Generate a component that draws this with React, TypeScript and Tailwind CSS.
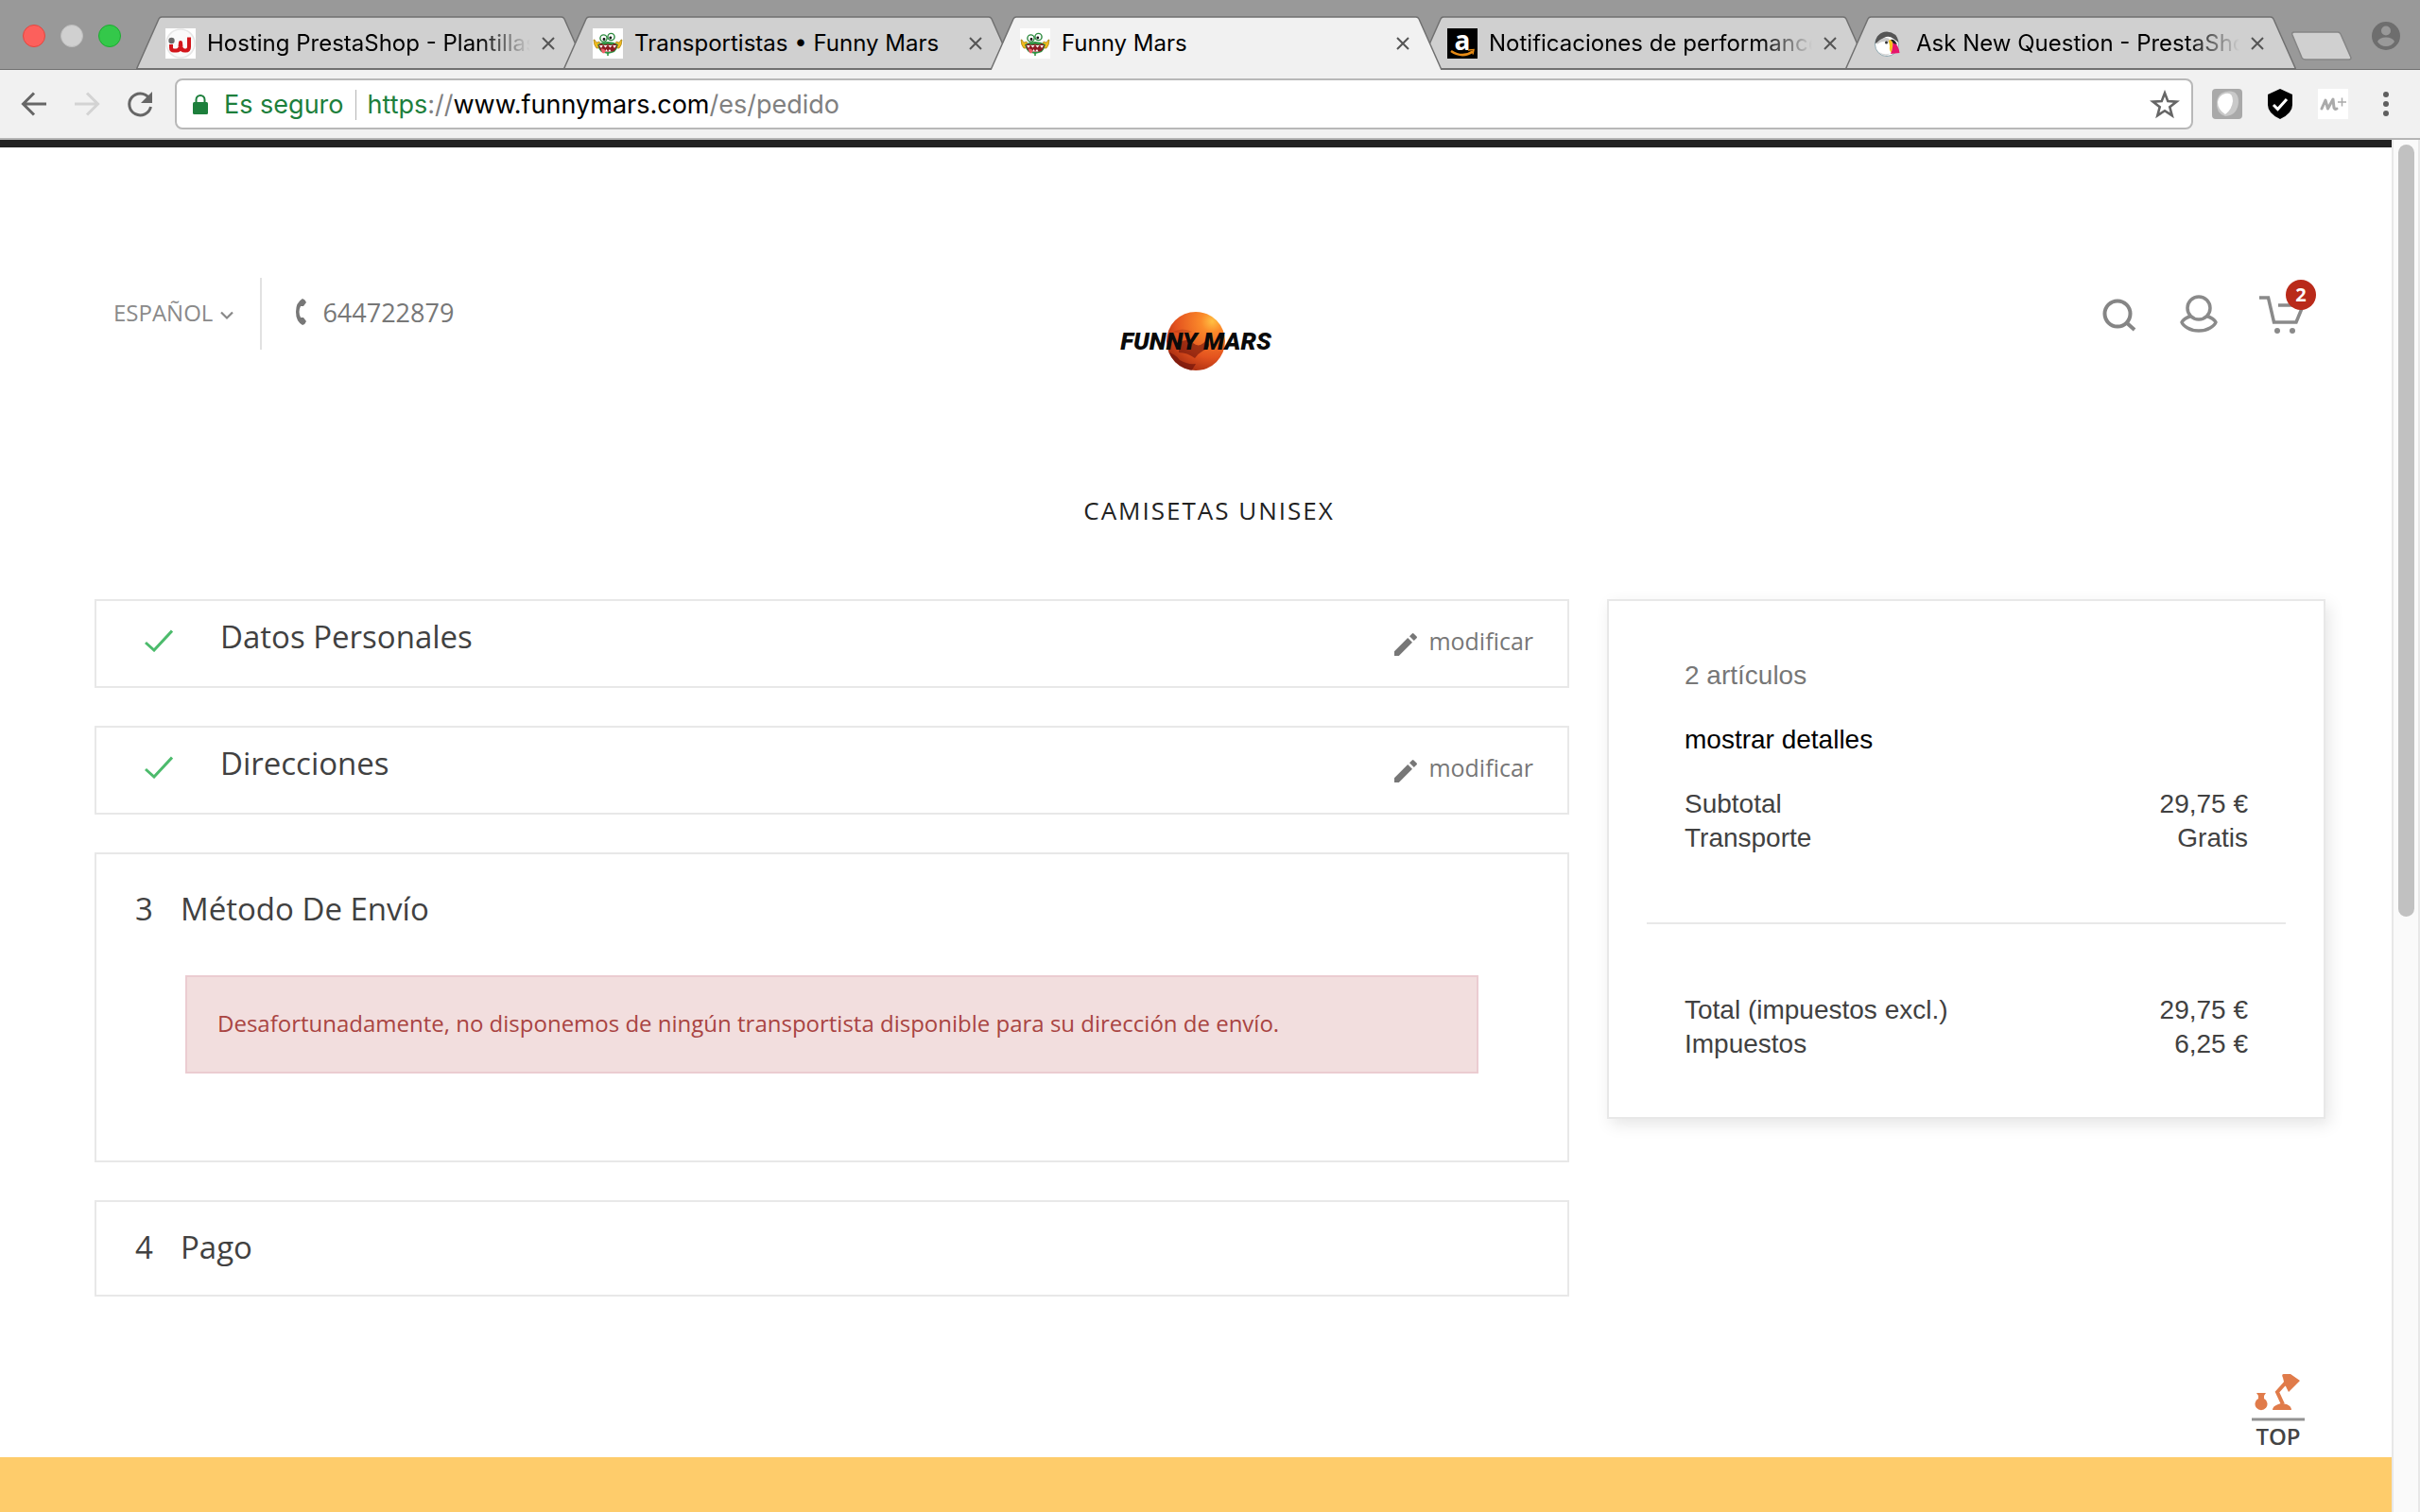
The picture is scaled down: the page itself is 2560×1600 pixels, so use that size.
import React from "react";

type TabData = { title: string; icon: React.ReactNode; active?: boolean; fade?: boolean };

function HostingIcon() {
  return (
    <svg viewBox="0 0 32 32" className="size-8 shrink-0" aria-hidden="true">
      <rect width="32" height="32" fill="#fff" />
      <circle cx="16" cy="16" r="15" fill="#fafafa" stroke="#e6e6e6" strokeWidth="1.5" />
      <circle cx="6.5" cy="13" r="3.2" fill="#6b6b6b" />
      <path d="M6 17v3.500q0 3 3 3h2.500q3.500 0 4-3.500l.5-5 .5 5q.5 3.500 4 3.500h1q3.500 0 3.500-4V9.500" fill="none" stroke="#d3151b" strokeWidth="4" strokeLinejoin="round" />
    </svg>
  );
}

function MonsterIcon() {
  return (
    <svg viewBox="0 0 32 32" className="size-8 shrink-0" aria-hidden="true">
      <rect width="32" height="32" fill="#fff" />
      <path d="M1 12q0 6 3 9 3 1 5-3l-2-4-3 1-2-3zM31 12q0 6-3 9-3 1-5-3l2-4 3 1 2-3z" fill="#f3b91b" stroke="#8f7414" strokeWidth=".6" />
      <path d="M5 17q5-3 11-3t11 3q-1 5-4 8l-3 1-4 1-4-1-3-1q-3-3-4-8z" fill="#2d9443" />
      <path d="m6 18 3-2 3 1.500 4-1 4 1 3-1.500 3 2q-2 6-5 6.500l-5 .5-5-.5q-3-.5-5-6.500z" fill="#8e1b22" />
      <path d="m7 18 2 3 2-3.500 2.500 3 2.500-3 2.500 3 2.500-3 2 3.500 2-3zM13 24.500l1.500-2.500 1.500 2.500 2-2.500 1.500 2.500z" fill="#fff" />
      <path d="M9 21.500q3-.500 4.500 2 0 2.500-2.500 3-2-1-2-5z" fill="#f0606a" />
      <path d="M16 26v3" stroke="#2d9443" strokeWidth="1.600" />
      <circle cx="11.500" cy="10.500" r="3.600" fill="#fff" stroke="#2d8a3f" strokeWidth="1.400" />
      <circle cx="19.500" cy="9" r="3.600" fill="#fff" stroke="#2d8a3f" strokeWidth="1.400" />
      <circle cx="12" cy="11.500" r="1.400" fill="#111" />
      <circle cx="18.800" cy="10" r="1.400" fill="#111" />
    </svg>
  );
}

function AmazonIcon() {
  return (
    <span className="relative flex size-8 shrink-0 items-center justify-center bg-black pb-2 font-['Open_Sans',sans-serif] text-[28px] leading-none font-bold text-white">
      a
      <svg viewBox="0 0 32 32" className="absolute inset-0 size-8" aria-hidden="true">
        <path d="M4 24q12 8 23 .5" fill="none" stroke="#e88b14" strokeWidth="2.600" />
        <path d="m22 23 6-.5-1 5" fill="none" stroke="#e88b14" strokeWidth="1.500" />
      </svg>
    </span>
  );
}

function PuffinIcon() {
  return (
    <svg viewBox="0 0 32 32" className="size-8 shrink-0" aria-hidden="true">
      <circle cx="13" cy="17" r="12.500" fill="#fff" stroke="#8fa9b2" />
      <path d="M.5 16Q2 4 13 3.500 24 4 25.500 15L20 11q-5-4-10-1-3 4-9.500 6z" fill="#555" />
      <path d="M2.500 15q7-7 13-4l1 5q-6-5-14 1z" fill="#c9c9c9" />
      <circle cx="12.500" cy="15" r="1.500" fill="#333" />
      <path d="M15 13q2-2 3.500 0l1 5-1.500 8q-3-3-2-7z" fill="#f8c31c" />
      <path d="M19 14q6 2 7.500 12L17 27q3-7 2-13z" fill="#e6156b" />
      <path d="M17 12q4-1 7 5l-4-1z" fill="#222" />
      <path d="M5 25q6 4 12 1l-4 3q-5 0-8-4z" fill="#d8d8d8" />
    </svg>
  );
}

const tabs: TabData[] = [
  { title: "Hosting PrestaShop - Plantillas", icon: <HostingIcon />, fade: true },
  { title: "Transportistas • Funny Mars", icon: <MonsterIcon /> },
  { title: "Funny Mars", icon: <MonsterIcon />, active: true },
  { title: "Notificaciones de performance", icon: <AmazonIcon />, fade: true },
  { title: "Ask New Question - PrestaShop", icon: <PuffinIcon />, fade: true },
];

function Tab({ tab }: { tab: TabData }) {
  return (
    <div className={tab.active ? "relative z-10 -mr-[25px] h-[57px] max-w-[477px] min-w-0 flex-1" : "relative -mr-[25px] h-[57px] max-w-[477px] min-w-0 flex-1"}>
      <svg viewBox="0 0 477 57" preserveAspectRatio="none" className="absolute inset-0 size-full" aria-hidden="true">
        <path d="M0 57 24 3Q25 1 27 1H450q2 0 3 2l24 54" fill={tab.active ? "#f1f1f1" : "#d0d0d0"} stroke="#707070" strokeWidth="1.500" />
        {!tab.active && <path d="M0 56H477" stroke="#707070" strokeWidth="2" />}
      </svg>
      <div className="relative flex h-full items-center gap-3 pt-px pr-[34px] pl-[31px]">
        {tab.icon}
        <span className={tab.fade ? "min-w-0 flex-1 overflow-hidden whitespace-nowrap [mask-image:linear-gradient(to_right,black_84%,transparent)]" : "min-w-0 flex-1 overflow-hidden whitespace-nowrap"}>
          {tab.title}
        </span>
        <button type="button" aria-label={"Cerrar " + tab.title} className="shrink-0">
          <svg viewBox="0 0 14 14" className="size-[14px]" aria-hidden="true">
            <path d="m1 1 12 12M13 1 1 13" stroke="#555" strokeWidth="2" />
          </svg>
        </button>
      </div>
    </div>
  );
}

function TabStrip() {
  return (
    <div className="flex h-[74px] items-end border-b border-[#707070] bg-[#999] text-2xl text-black">
      <div className="flex w-36 shrink-0 gap-4 self-center pt-[2px] pl-6">
        <button type="button" aria-label="Cerrar ventana" className="size-6 rounded-full border border-[#e2463f] bg-[#fc605c]" />
        <button type="button" aria-label="Minimizar" className="size-6 rounded-full border border-[#bdbdbd] bg-[#d0d0d0]" />
        <button type="button" aria-label="Ampliar" className="size-6 rounded-full border border-[#1dab31] bg-[#34c84a]" />
      </div>
      <div className="-mb-px flex min-w-0 flex-1">
        {tabs.map((t) => (
          <Tab key={t.title} tab={t} />
        ))}
        <button type="button" aria-label="Nueva pestaña" className="mt-4 ml-5 h-8 shrink-0">
          <svg viewBox="0 0 64 32" className="h-8 w-16" aria-hidden="true">
            <path d="M3 1H49q2 0 3 2l11 25q0 2-2 2H15q-3 0-4-2L1 4Q0 1 3 1z" fill="#d0d0d0" stroke="#858585" strokeWidth="1.500" />
          </svg>
        </button>
      </div>
      <button type="button" aria-label="Perfil" className="mr-5 mb-[19px] shrink-0">
        <svg viewBox="0 0 32 32" className="size-8" aria-hidden="true">
          <circle cx="16" cy="16" r="15" fill="#6e6e6e" />
          <circle cx="16" cy="10.500" r="5" fill="#999" />
          <path d="M7 22q2-4.500 9-4.500t9 4.500q-3 5-9 5t-9-5z" fill="#999" />
        </svg>
      </button>
    </div>
  );
}

function Toolbar() {
  return (
    <div className="flex h-[74px] items-center border-b-2 border-[#b5b5b5] bg-[#f1f1f1] pr-5 pl-5 text-[27px]">
      <div className="flex w-[165px] shrink-0 gap-6">
        <button type="button" aria-label="Atrás">
          <svg viewBox="0 0 32 32" className="size-8" fill="none" stroke="#666" strokeWidth="3" aria-hidden="true">
            <path d="M29 16H5M16 4.500 4.500 16 16 27.500" />
          </svg>
        </button>
        <button type="button" aria-label="Adelante">
          <svg viewBox="0 0 32 32" className="size-8" fill="none" stroke="#d3d3d3" strokeWidth="3" aria-hidden="true">
            <path d="M3 16h24M16 4.500 27.500 16 16 27.500" />
          </svg>
        </button>
        <button type="button" aria-label="Recargar">
          <svg viewBox="0 0 32 32" className="size-8" aria-hidden="true">
            <path d="M25.500 9.500A11.500 11.500 0 1 0 27.500 19" fill="none" stroke="#666" strokeWidth="3" />
            <path d="M29 3v12H17z" fill="#666" />
          </svg>
        </button>
      </div>
      <div className="relative flex h-[54px] min-w-0 flex-1 items-center rounded-lg border-2 border-[#b8b8b8] bg-white pt-[2px] pr-3 pl-4">
        <svg viewBox="0 0 18 24" className="mr-4 h-6 w-[18px]" aria-hidden="true">
          <rect x="1" y="9" width="16" height="13" rx="1.500" fill="#1d7f3c" />
          <path d="M4.500 10V6.500a4.500 4.500 0 0 1 9 0V10" fill="none" stroke="#1d7f3c" strokeWidth="2" />
        </svg>
        <span className="text-[#1d7f3c]">Es seguro</span>
        <span className="mx-3 h-8 w-px bg-[#b5b5b5]" />
        <span className="flex-1 whitespace-nowrap text-[#808080]">
          <span className="text-[#1d7f3c]">https</span>://<span className="text-black">www.funnymars.com</span>/es/pedido
        </span>
        <input type="text" aria-label="Dirección" className="absolute inset-0 bg-transparent" />
        <button type="button" aria-label="Añadir a favoritos" className="relative">
          <svg viewBox="0 0 32 32" className="size-8" aria-hidden="true">
            <path d="m16 3.500 3.300 8.600 9.200.5-7.200 5.700 2.400 8.900-7.700-5-7.700 5 2.400-8.900-7.200-5.700 9.200-.5z" fill="none" stroke="#666" strokeWidth="2.600" />
          </svg>
        </button>
      </div>
      <div className="ml-5 flex shrink-0 items-center gap-6">
        <button type="button" aria-label="Extensión">
          <svg viewBox="0 0 32 32" className="size-8" aria-hidden="true">
            <rect width="32" height="32" rx="4" fill="#a9a9a9" />
            <path d="M14 3q14-3 14 11-1 14-14 15Q4 26 5 14q1-9 9-11z" fill="#c9c9c9" />
            <path d="M14 5q8-2 8 8-1 9-8 14-8-5-8-13 1-7 8-9z" fill="#fff" />
          </svg>
        </button>
        <button type="button" aria-label="Protección">
          <svg viewBox="0 0 32 32" className="size-8" aria-hidden="true">
            <path d="m16 0 13 6v11q0 9-13 15Q3 26 3 17V6z" fill="#000" />
            <path d="m9 17 4.500 4.500L23 11" fill="none" stroke="#fff" strokeWidth="3" />
          </svg>
        </button>
        <button type="button" aria-label="Movistar+">
          <svg viewBox="0 0 32 32" className="size-8" aria-hidden="true">
            <rect width="32" height="32" fill="#fff" />
            <path d="M4 21 8 12l2.500 9L16 11l1 9q1 2 3 1" fill="none" stroke="#aaa" strokeWidth="3" strokeLinecap="round" strokeLinejoin="round" />
            <path d="M21 14h9M25.500 9.500v9" stroke="#aaa" strokeWidth="1.500" />
          </svg>
        </button>
        <button type="button" aria-label="Menú">
          <svg viewBox="0 0 32 32" className="size-8" fill="#5f5f5f" aria-hidden="true">
            <circle cx="16" cy="6" r="3" />
            <circle cx="16" cy="16" r="3" />
            <circle cx="16" cy="26" r="3" />
          </svg>
        </button>
      </div>
    </div>
  );
}

function SiteHeader() {
  return (
    <header className="grid grid-cols-[1fr_auto_1fr] items-start pt-[138px] pr-[92px] pl-[120px] text-[#777]">
      <div className="flex h-[76px] items-center">
        <div className="flex h-full items-center border-r-2 border-[#e2e2e2] pr-7">
          <select aria-label="Idioma" className="mb-[2px] field-sizing-content appearance-none bg-transparent p-0 text-2xl text-[#8a8a8a]">
            <option>ESPAÑOL</option>
          </select>
          <svg viewBox="0 0 14 10" className="mt-1 ml-2 h-[10px] w-[14px]" aria-hidden="true">
            <path d="m1 1.500 6 6 6-6" fill="none" stroke="#888" strokeWidth="2.200" />
          </svg>
        </div>
        <svg viewBox="0 0 12 28" className="mb-1 ml-9 h-7 w-3" fill="#777" aria-hidden="true">
          <path d="M7 0q3 1 4 4L8 8H5q-3 6 0 12h3l3 4q-1 3-4 4Q0 24 0 14T7 0z" />
        </svg>
        <a href="tel:644722879" className="mb-[2px] ml-4 text-[27px] leading-9">644722879</a>
      </div>
      <a href="#inicio" className="relative mt-[35px] -ml-7 flex h-16 items-center justify-center">
        <svg viewBox="0 0 64 64" className="absolute size-16" aria-hidden="true">
          <defs>
            <radialGradient id="planet" cx="78%" cy="16%" r="95%">
              <stop offset="0" stopColor="#ffc043" />
              <stop offset=".2" stopColor="#fb8a2a" />
              <stop offset=".65" stopColor="#e4531f" />
              <stop offset="1" stopColor="#a32a10" />
            </radialGradient>
            <clipPath id="disc"><circle cx="32" cy="32" r="31" /></clipPath>
          </defs>
          <circle cx="32" cy="32" r="31" fill="url(#planet)" />
          <g clipPath="url(#disc)" fill="#6d130a">
            <path d="M14 34q8-6 15 0t14-3q6 4 1 9-9 4-13 10-8-6-17-6z" opacity=".6" />
            <path d="M0 43q10 2 15 9 8 5 17 4l-5 8H8z" opacity=".65" />
            <path d="M8 22q10-5 20 0-10 3-20 0z" opacity=".2" />
          </g>
        </svg>
        <span className="relative font-['Roboto',sans-serif] text-[26px] leading-none font-black whitespace-nowrap text-[#0a0a0a] italic">FUNNY MARS</span>
      </a>
      <div className="flex h-[76px] items-center justify-end gap-11">
        <button type="button" aria-label="Buscar" className="pt-px pr-[2px]">
          <svg viewBox="0 0 36 36" className="size-9" fill="none" stroke="#858585" aria-hidden="true">
            <circle cx="16" cy="17" r="13.500" strokeWidth="4" />
            <path d="m25 26 9 8" strokeWidth="4" />
          </svg>
        </button>
        <button type="button" aria-label="Mi cuenta">
          <svg viewBox="0 0 40 40" className="size-10" fill="none" stroke="#8a8a8a" strokeWidth="3.500" aria-hidden="true">
            <circle cx="20" cy="14" r="12" />
            <path d="M11.500 22.500Q4 25 2 29q1 3 6 6 5 3 12 3t12-3q5-3 6-6-2-4-9.500-6.500" strokeLinejoin="round" />
          </svg>
        </button>
        <button type="button" aria-label="Carrito" className="relative pt-[2px]">
          <svg viewBox="0 0 48 42" className="h-[42px] w-12" fill="none" stroke="#8a8a8a" strokeWidth="3.500" aria-hidden="true">
            <path d="M0 3h9.500l6 26H39L46 12M20 11h20" />
            <circle cx="19" cy="38" r="3" fill="#8a8a8a" stroke="none" />
            <circle cx="35" cy="38" r="3" fill="#8a8a8a" stroke="none" />
          </svg>
          <span className="absolute -top-[14px] left-7 flex size-8 items-center justify-center rounded-full bg-[#b92a1a] text-xl leading-none font-bold text-white">2</span>
        </button>
      </div>
    </header>
  );
}

function DoneStep({ title }: { title: string }) {
  return (
    <section className="flex items-start border-2 border-[#e8e8e8] pr-9 pl-[51px]">
      <svg viewBox="0 0 30 24" className="mt-[30px] h-6 w-[30px]" aria-hidden="true">
        <path d="m1 14 9 8L29 1.500" fill="none" stroke="#4cbb6c" strokeWidth="3" />
      </svg>
      <h2 className="mt-4 mb-[30px] ml-[50px] flex-1 text-[33px] leading-[44px] text-[#414141]">{title}</h2>
      <button type="button" className="mt-6 flex items-center gap-3 text-[25px] leading-9 text-[#777]">
        <svg viewBox="0 0 24 24" className="mt-2 size-6" fill="#777" aria-hidden="true">
          <path d="M0 19.200V24h4.800L19 9.800 14.200 5zM23.600 5.200q.8-.9 0-1.700L20.500.4q-.8-.8-1.700 0L16 3.200 20.800 8z" />
        </svg>
        modificar
      </button>
    </section>
  );
}

function Row({ label, value }: { label: string; value: string }) {
  return (
    <div className="flex justify-between">
      <dt>{label}</dt>
      <dd>{value}</dd>
    </div>
  );
}

function Summary() {
  return (
    <aside className="border-2 border-[#e8e8e8] bg-white px-10 pt-[61px] pb-[59px] font-['Liberation_Sans',Arial,sans-serif] text-[28px] leading-9 text-[#414141] shadow-[4px_6px_16px_rgba(0,0,0,0.1)]">
      <div className="px-10">
        <p className="text-[#777]">2 artículos</p>
        <a href="#detalles" className="mt-8 block text-black">mostrar detalles</a>
        <dl className="mt-8">
          <Row label="Subtotal" value="29,75 €" />
          <Row label="Transporte" value="Gratis" />
        </dl>
      </div>
      <hr className="mt-[71px] border-t-2 border-[#e8e8e8]" />
      <dl className="mt-[73px] px-10">
        <Row label="Total (impuestos excl.)" value="29,75 €" />
        <Row label="Impuestos" value="6,25 €" />
      </dl>
    </aside>
  );
}

export default function App() {
  return (
    <div className="flex min-h-screen flex-col bg-white font-['Inter',sans-serif]">
      <TabStrip />
      <Toolbar />
      <div className="flex flex-1">
        <div className="flex min-w-0 flex-1 flex-col border-t-8 border-[#222] font-['Open_Sans',sans-serif]">
          <SiteHeader />
          <nav className="mt-[129px] pl-7 text-center text-[26px] leading-9 text-[#222]">
            <a href="#camisetas" className="tracking-[2px]">CAMISETAS UNISEX</a>
          </nav>
          <main className="mt-[76px] grid grid-cols-[39fr_19fr] items-start gap-10 pr-[70px] pl-[100px]">
            <div className="flex flex-col gap-10">
              <DoneStep title="Datos Personales" />
              <DoneStep title="Direcciones" />
              <section className="border-2 border-[#e8e8e8] pt-9 pb-[92px] text-[#414141]">
                <h2 className="flex pl-[41px] text-[33px] leading-[44px]">
                  <span className="w-12">3</span>Método De Envío
                </h2>
                <p role="alert" className="mx-[94px] mt-12 border-2 border-[#ebccd1] bg-[#f2dede] px-8 pt-[31px] pb-[33px] text-2xl leading-9 text-[#a94442]">
                  Desafortunadamente, no disponemos de ningún transportista disponible para su dirección de envío.
                </p>
              </section>
              <section className="border-2 border-[#e8e8e8] pt-[26px] pb-7 text-[#414141]">
                <h2 className="flex pl-[41px] text-[33px] leading-[44px]">
                  <span className="w-12">4</span>Pago
                </h2>
              </section>
            </div>
            <Summary />
          </main>
          <div className="mt-20 flex justify-end pr-[92px]">
            <a href="#inicio" className="flex w-14 flex-col items-center text-2xl leading-8 font-semibold text-[#444]">
              <svg viewBox="0 0 56 52" className="h-[52px] w-14" aria-hidden="true">
                <g fill="#e07b4a">
                  <path d="M5 22h10l-2 3v3a6.500 6.500 0 1 1-6 0v-3zM22 40q0-4 6-6l3-1 6 1q5 2 5 6z" />
                  <path d="M33 6Q31 2 34 2h7l10 7-12 12-3-6q-3-2-2-5z" />
                </g>
                <path d="m36 11-9 10 6 13" fill="none" stroke="#e07b4a" strokeWidth="4" />
                <path d="M0 50h56" stroke="#929292" strokeWidth="3" />
              </svg>
              TOP
            </a>
          </div>
          <footer className="mt-[6px] min-h-14 flex-1 bg-[#fecc6b]" />
        </div>
        <div className="flex w-[30px] flex-col items-center border-r-2 border-l-2 border-[#e8e8e8] bg-[#fafafa] pt-[5px]" aria-hidden="true">
          <div className="w-[17px] grow-[817] rounded-full bg-[#c1c1c1]" />
          <div className="grow-[630]" />
        </div>
      </div>
    </div>
  );
}
